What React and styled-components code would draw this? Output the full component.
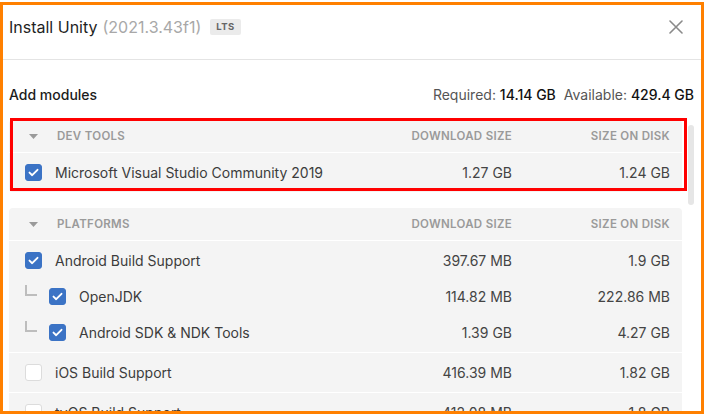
import React from 'react';
import styled, { createGlobalStyle } from 'styled-components';

const GlobalStyle = createGlobalStyle`
  html, body {
    margin: 0;
    padding: 0;
    background: #fff;
  }
  body {
    font-family: Inter, "Noto Sans", sans-serif;
    -webkit-font-smoothing: antialiased;
  }
`;

const Frame = styled.div`
  box-sizing: border-box;
  margin-top: 2px;
  width: 704px;
  height: 412px;
  border: 3px solid #ff8000;
  background: #fff;
  overflow: hidden;
  display: flex;
  flex-direction: column;
`;

const Header = styled.div`
  height: 55px;
  flex-shrink: 0;
  display: flex;
  align-items: flex-start;
  padding: 12px 18px 0 6px;
  box-sizing: border-box;
  border-bottom: 1px solid #e4e4e4;
`;

const Title = styled.h1`
  margin: 0;
  font-size: 16px;
  line-height: 20px;
  font-weight: 400;
  color: #1f1f1f;
  display: flex;
  align-items: center;
`;

const Version = styled.span`
  color: #a8a8a8;
  margin-left: 5px;
`;

const Badge = styled.span`
  margin-left: 9px;
  height: 16px;
  padding: 0 6px;
  display: inline-flex;
  align-items: center;
  background: #ebebeb;
  border-radius: 2px;
  font-size: 9.5px;
  font-weight: 700;
  letter-spacing: 0.4px;
  color: #666;
`;

const CloseButton = styled.button`
  margin-left: auto;
  margin-top: 3px;
  padding: 0;
  border: 0;
  background: none;
  width: 14px;
  height: 14px;
  display: flex;
  cursor: pointer;
`;

const Body = styled.div`
  padding: 0 7px 0 6px;
  display: flex;
  flex-direction: column;
`;

const ModulesBar = styled.div`
  display: flex;
  align-items: center;
  justify-content: space-between;
  padding-top: 25px;
  height: 20px;
  font-size: 14px;
  line-height: 20px;
  margin-bottom: 15px;
`;

const ModulesTitle = styled.span`
  color: #1c1c1c;
  font-weight: 500;
`;

const Space = styled.span`
  color: #555;
  margin-left: ${p => (p.$first ? 0 : 8)}px;
`;

const SpaceValue = styled.span`
  color: #111;
  font-weight: 500;
`;

const ScrollArea = styled.div`
  display: flex;
  gap: 6px;
`;

const List = styled.div`
  width: 674px;
  display: flex;
  flex-direction: column;
  gap: 16px;
`;

const ScrollThumb = styled.div`
  width: 6px;
  height: 80px;
  margin-top: 5px;
  border-radius: 3px;
  background: #e6e6e6;
  flex-shrink: 0;
`;

const Panel = styled.section`
  position: relative;
  background: #f4f4f4;
  border-radius: 4px;

  ${p =>
    p.$highlight &&
    `
    &::after {
      content: '';
      position: absolute;
      top: -2px;
      left: 1px;
      right: -5px;
      bottom: 1px;
      border: 3px solid #ff0000;
      pointer-events: none;
    }
  `}
`;

const Columns = styled.div`
  display: grid;
  grid-template-columns: 1fr 150px 158px;
  padding-right: 12px;
  align-items: center;
`;

const PanelHead = styled(Columns)`
  height: 32px;
  border-bottom: 1px solid #fff;
  font-size: 11.5px;
  font-weight: 600;
  letter-spacing: 0.3px;
  color: #9a9a9a;
  text-transform: uppercase;
`;

const Group = styled.div`
  padding: 1px 0 2px;
  border-bottom: ${p => (p.$last ? 'none' : '1px solid #fff')};
`;

const Row = styled(Columns)`
  height: 36px;
  font-size: 14px;
  color: #3c3c3c;
`;

const NameCell = styled.div`
  display: flex;
  align-items: center;
  padding-left: 16px;
  gap: ${p => (p.$head ? 15 : 13)}px;
  min-width: 0;
  white-space: nowrap;
`;

const SizeCell = styled.div`
  text-align: right;
  color: ${p => (p.$head ? 'inherit' : '#444')};
  white-space: nowrap;
`;

const Caret = styled.span`
  width: 17px;
  display: flex;
  justify-content: center;
`;

const Branch = styled.span`
  box-sizing: border-box;
  width: 12px;
  height: 11px;
  margin-right: -1px;
  margin-bottom: 11px;
  border-left: 2px solid #bdbdbd;
  border-bottom: 2px solid #bdbdbd;
  flex-shrink: 0;
`;

const Box = styled.span`
  box-sizing: border-box;
  width: 17px;
  height: 17px;
  border-radius: 3px;
  flex-shrink: 0;
  display: flex;
  align-items: center;
  justify-content: center;
  background: ${p => (p.$checked ? '#3b73c5' : '#fff')};
  border: 1px solid ${p => (p.$checked ? '#3b73c5' : '#dcdcdc')};
`;

const Checkbox = ({ checked }) => (
  <Box $checked={checked}>
    {checked && (
      <svg width="11" height="9" viewBox="0 0 11 9">
        <path d="M1.5 4.6 L4.2 7.2 L9.5 1.8" fill="none" stroke="#fff" strokeWidth="1.9" strokeLinecap="round" strokeLinejoin="round" />
      </svg>
    )}
  </Box>
);

const sections = [
  {
    title: 'Dev tools',
    highlight: true,
    groups: [
      [{ name: 'Microsoft Visual Studio Community 2019', download: '1.27 GB', disk: '1.24 GB', checked: true }],
    ],
  },
  {
    title: 'Platforms',
    groups: [
      [
        { name: 'Android Build Support', download: '397.67 MB', disk: '1.9 GB', checked: true },
        { name: 'OpenJDK', download: '114.82 MB', disk: '222.86 MB', checked: true, child: true },
        { name: 'Android SDK & NDK Tools', download: '1.39 GB', disk: '4.27 GB', checked: true, child: true },
      ],
      [{ name: 'iOS Build Support', download: '416.39 MB', disk: '1.82 GB' }],
      [{ name: 'tvOS Build Support', download: '412.08 MB', disk: '1.8 GB' }],
    ],
  },
];

export default function App() {
  return (
    <>
      <GlobalStyle />
      <Frame>
        <Header>
          <Title>
            Install Unity<Version>(2021.3.43f1)</Version>
            <Badge>LTS</Badge>
          </Title>
          <CloseButton aria-label="Close">
            <svg width="14" height="14" viewBox="0 0 14 14">
              <path d="M1 1 L13 13 M13 1 L1 13" stroke="#8a8a8a" strokeWidth="1.6" strokeLinecap="round" />
            </svg>
          </CloseButton>
        </Header>
        <Body>
          <ModulesBar>
            <ModulesTitle>Add modules</ModulesTitle>
            <span>
              <Space $first>
                Required: <SpaceValue>14.14 GB</SpaceValue>
              </Space>
              <Space>
                Available: <SpaceValue>429.4 GB</SpaceValue>
              </Space>
            </span>
          </ModulesBar>
          <ScrollArea>
            <List>
              {sections.map(section => (
                <Panel key={section.title} $highlight={section.highlight}>
                  <PanelHead>
                    <NameCell $head>
                      <Caret>
                        <svg width="9" height="5" viewBox="0 0 9 5">
                          <path d="M0 0 H9 L4.5 5 Z" fill="#9a9a9a" />
                        </svg>
                      </Caret>
                      {section.title}
                    </NameCell>
                    <SizeCell $head>Download size</SizeCell>
                    <SizeCell $head>Size on disk</SizeCell>
                  </PanelHead>
                  {section.groups.map((group, gi) => (
                    <Group key={gi} $last={gi === section.groups.length - 1}>
                      {group.map(item => (
                        <Row key={item.name}>
                          <NameCell>
                            {item.child && <Branch />}
                            <Checkbox checked={item.checked} />
                            {item.name}
                          </NameCell>
                          <SizeCell>{item.download}</SizeCell>
                          <SizeCell>{item.disk}</SizeCell>
                        </Row>
                      ))}
                    </Group>
                  ))}
                </Panel>
              ))}
            </List>
            <ScrollThumb />
          </ScrollArea>
        </Body>
      </Frame>
    </>
  );
}
